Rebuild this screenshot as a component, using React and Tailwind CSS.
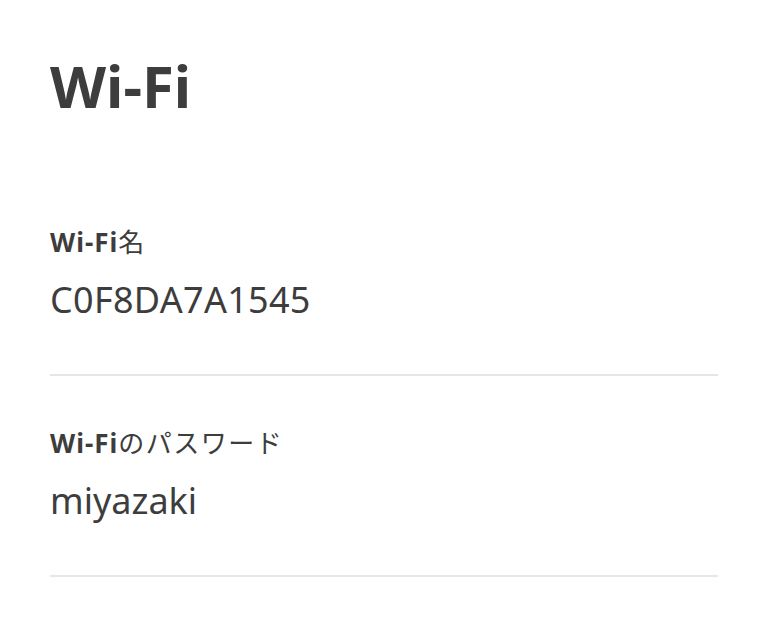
export default function App() {
  const latin = { fontFamily: '"Noto Sans", "Noto Sans CJK JP", sans-serif' };
  return (
    <div className="min-h-[630px] w-full bg-white px-[50px] text-[#3d3d3d]" style={latin}>
      <div className="pt-[57px] text-[58px] font-bold leading-[58px]">Wi-Fi</div>

      <div className="mt-[111px] text-[26px] leading-[32px]">
        <span className="font-bold tracking-[1px]">Wi-Fi</span>名
      </div>
      <div className="mt-[20px] text-[36px] leading-[44px] tracking-[0.3px]">C0F8DA7A1545</div>
      <div className="mt-[52px] h-[2px] bg-[#e6e6e6]" />

      <div className="mt-[51px] text-[26px] leading-[32px]">
        <span className="font-bold tracking-[1px]">Wi-Fi</span>
        <span className="tracking-[1.5px]">のパスワード</span>
      </div>
      <div className="mt-[20px] text-[36px] leading-[44px]">miyazaki</div>
      <div className="mt-[52px] h-[2px] bg-[#e6e6e6]" />
    </div>
  );
}
